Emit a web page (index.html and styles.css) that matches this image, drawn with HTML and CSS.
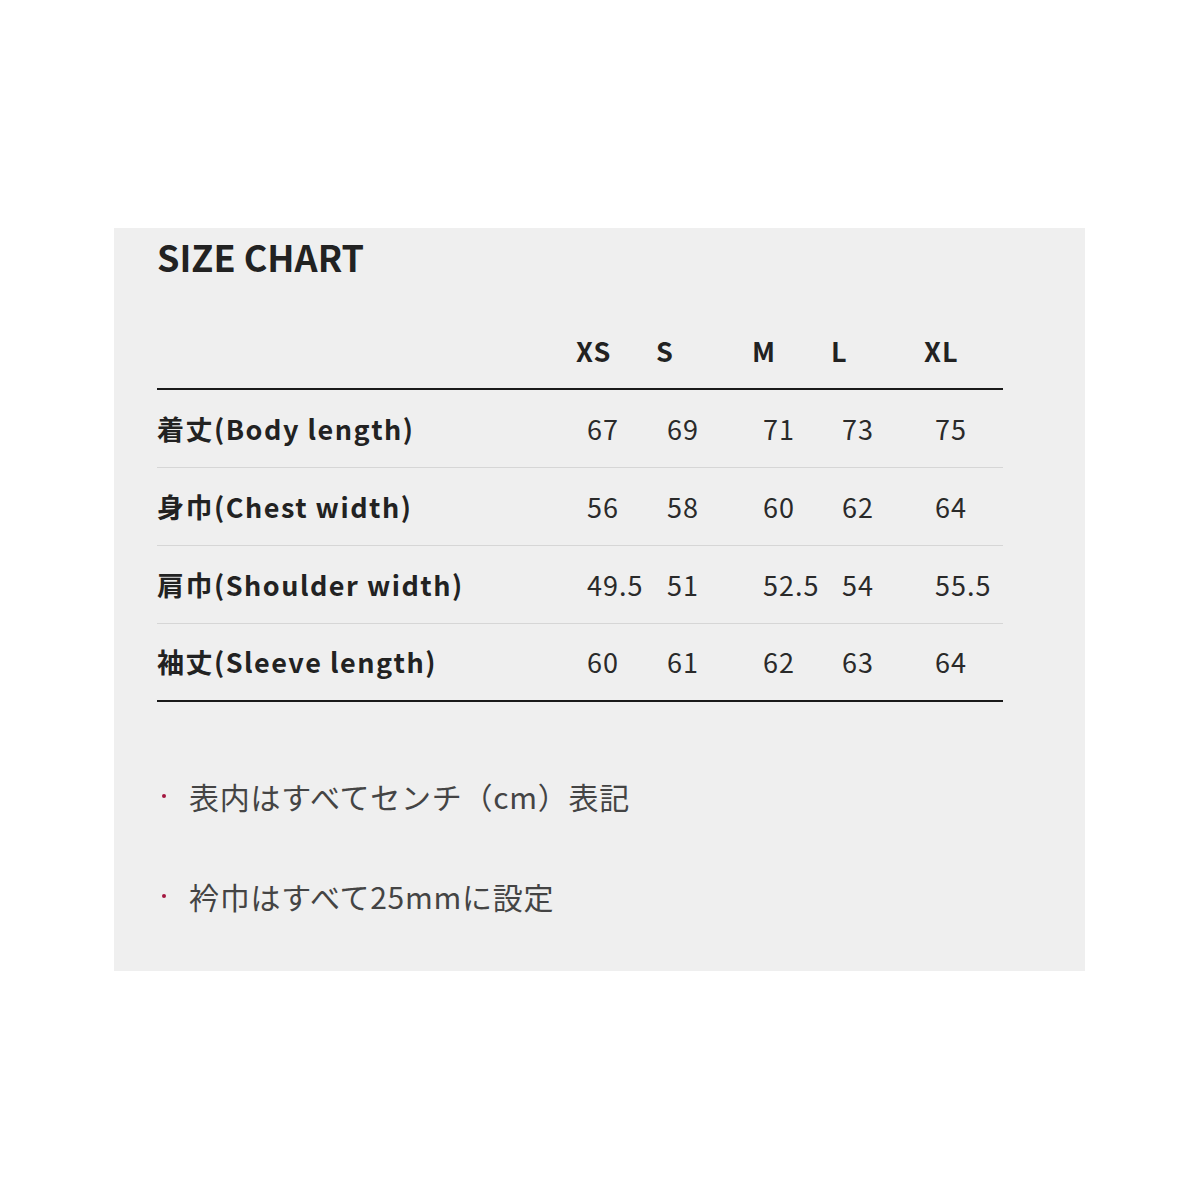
FILE: index.html
```html
<!DOCTYPE html>
<html lang="ja">
<head>
<meta charset="utf-8">
<link rel="stylesheet" href="styles.css">
</head>
<body>
<section class="panel">
  <h2 class="title">SIZE CHART</h2>
  <table class="chart">
    <colgroup>
      <col class="c-label"><col class="c-xs"><col class="c-s"><col class="c-m"><col class="c-l"><col class="c-xl">
    </colgroup>
    <thead>
      <tr><th></th><th>XS</th><th>S</th><th>M</th><th>L</th><th>XL</th></tr>
    </thead>
    <tbody>
      <tr><th>着丈(Body length)</th><td>67</td><td>69</td><td>71</td><td>73</td><td>75</td></tr>
      <tr><th>身巾(Chest width)</th><td>56</td><td>58</td><td>60</td><td>62</td><td>64</td></tr>
      <tr><th>肩巾(Shoulder width)</th><td>49.5</td><td>51</td><td>52.5</td><td>54</td><td>55.5</td></tr>
      <tr><th>袖丈(Sleeve length)</th><td>60</td><td>61</td><td>62</td><td>63</td><td>64</td></tr>
    </tbody>
  </table>
  <ul class="notes">
    <li>表内はすべてセンチ（cm）表記</li>
    <li>衿巾はすべて25mmに設定</li>
  </ul>
</section>
</body>
</html>
```
FILE: styles.css
```css
html, body {
  margin: 0;
  padding: 0;
  background: #ffffff;
}
body {
  font-family: "Noto Sans CJK JP", "Noto Sans", sans-serif;
  color: #222;
}
.panel {
  margin: 228px 0 0 114px;
  width: 971px;
  height: 743px;
  box-sizing: border-box;
  padding: 0 0 0 43px;
  background: #efefef;
}
.title {
  margin: 0;
  height: 60px;
  line-height: 56px;
  font-size: 36px;
  font-weight: 700;
  letter-spacing: 0;
  color: #222;
}
.chart {
  margin-top: 24px;
  width: 846px;
  border-collapse: collapse;
  table-layout: fixed;
}
.c-label { width: 419px; }
.c-xs { width: 80px; }
.c-s { width: 96px; }
.c-m { width: 79px; }
.c-l { width: 93px; }
.c-xl { width: 79px; }
.chart th, .chart td {
  padding: 0;
  text-align: left;
  vertical-align: middle;
  white-space: nowrap;
}
.chart thead th {
  height: 76px;
  font-size: 27px;
  font-weight: 700;
  letter-spacing: 1px;
  border-bottom: 2px solid #1a1a1a;
}
.chart tbody tr {
  height: 78px;
  border-bottom: 1px solid #d6d6d6;
}
.chart tbody tr:last-child {
  border-bottom: 2px solid #1a1a1a;
}
.chart tbody th {
  font-size: 27px;
  font-weight: 700;
  letter-spacing: 1.5px;
  color: #222;
}
.chart tbody td {
  padding-left: 11px;
  font-size: 27px;
  font-weight: 400;
  letter-spacing: 1px;
  color: #2a2a2a;
}
.notes {
  list-style: none;
  margin: 44px 0 0 0;
  padding: 0;
}
.notes li {
  position: relative;
  height: 100px;
  line-height: 100px;
  padding-left: 32px;
  font-size: 30px;
  letter-spacing: 0.75px;
  color: #444;
}
.notes li::before {
  content: "";
  position: absolute;
  left: 5px;
  top: 48px;
  width: 4px;
  height: 4px;
  border-radius: 50%;
  background: #a3163f;
}
```
